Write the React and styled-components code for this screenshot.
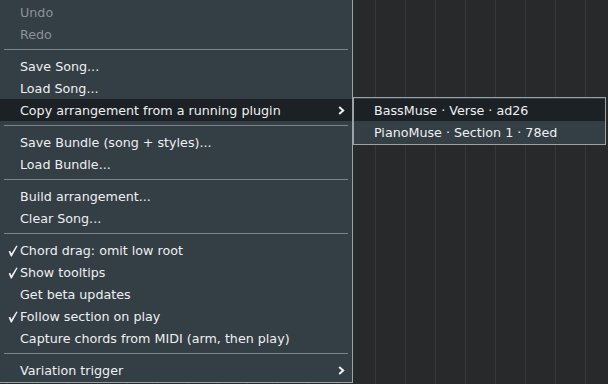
import React from 'react';
import styled, { createGlobalStyle } from 'styled-components';

const GlobalStyle = createGlobalStyle`
	html, body {
		margin: 0;
		padding: 0;
		background: #28292b;
	}
	body {
		font-family: 'DejaVu Sans', Verdana, sans-serif;
	}
`;

const Page = styled.div`
	width: 608px;
	height: 384px;
	overflow: hidden;
	display: flex;
	align-items: flex-start;
	background-color: #28292b;
	background-image: repeating-linear-gradient(
		to right,
		transparent 0px,
		transparent 29px,
		#35373a 29px,
		#35373a 30px
	);
	background-position: 346px 0;
`;

const Menu = styled.div`
	width: 352px;
	height: 381px;
	padding-top: 1px;
	background: #343e45;
	border-right: 1px solid #9ba3a8;
	border-bottom: 1px solid #9ba3a8;
	display: flex;
	flex-direction: column;
`;

const SubMenu = styled.div`
	margin-top: 97px;
	width: 251px;
	padding: 1px 0;
	background: #343e45;
	border: 1px solid #9ba3a8;
	display: flex;
	flex-direction: column;
`;

const Item = styled.div`
	height: 22px;
	box-sizing: border-box;
	padding-top: 1px;
	display: flex;
	align-items: center;
	position: relative;
	padding-left: ${(p) => p.$indent || 20}px;
	font-size: 12.7px;
	color: ${(p) => (p.$disabled ? '#8b9398' : '#eef0f1')};
	background: ${(p) => (p.$active ? '#1b2125' : 'transparent')};
	white-space: nowrap;
`;

const Check = styled.svg`
	position: absolute;
	left: 8px;
	top: 6px;
	width: 10px;
	height: 12px;
`;

const Arrow = styled.svg`
	position: absolute;
	right: 7px;
	top: 7px;
	width: 7px;
	height: 9px;
`;

const Separator = styled.div`
	height: 1px;
	margin: 4px 0 5px 4px;
	width: 344px;
	background: #7b858b;
`;

const Chevron = () => (
	<Arrow viewBox="0 0 7 9">
		<path d="M1.2 1 L5.2 4.5 L1.2 8" fill="none" stroke="#eef0f1" strokeWidth="2" />
	</Arrow>
);

const Tick = () => (
	<Check viewBox="0 0 10 12">
		<path d="M0.6 6.6 L2.2 5.8 L3.4 8.6 L8.4 0.4 L9.6 1 L3.8 11.4 L2.8 11.4 Z" fill="#eef0f1" />
	</Check>
);

const menu = [
	{ label: 'Undo', disabled: true },
	{ label: 'Redo', disabled: true },
	'sep',
	{ label: 'Save Song...' },
	{ label: 'Load Song...' },
	{ label: 'Copy arrangement from a running plugin', sub: true, active: true },
	'sep',
	{ label: 'Save Bundle (song + styles)...' },
	{ label: 'Load Bundle...' },
	'sep',
	{ label: 'Build arrangement...' },
	{ label: 'Clear Song...' },
	'sep',
	{ label: 'Chord drag: omit low root', checked: true },
	{ label: 'Show tooltips', checked: true },
	{ label: 'Get beta updates' },
	{ label: 'Follow section on play', checked: true },
	{ label: 'Capture chords from MIDI (arm, then play)' },
	'sep',
	{ label: 'Variation trigger', sub: true },
];

const plugins = [
	'BassMuse · Verse · ad26',
	'PianoMuse · Section 1 · 78ed',
];

export default function App() {
	return (
		<>
			<GlobalStyle />
			<Page>
				<Menu>
					{menu.map((item, i) =>
						item === 'sep' ? (
							<Separator key={i} />
						) : (
							<Item key={i} $disabled={item.disabled} $active={item.active}>
								{item.checked && <Tick />}
								{item.label}
								{item.sub && <Chevron />}
							</Item>
						),
					)}
				</Menu>
				<SubMenu>
					{plugins.map((p, i) => (
						<Item key={p} $indent={20} $active={i === 0}>
							{p}
						</Item>
					))}
				</SubMenu>
			</Page>
		</>
	);
}
